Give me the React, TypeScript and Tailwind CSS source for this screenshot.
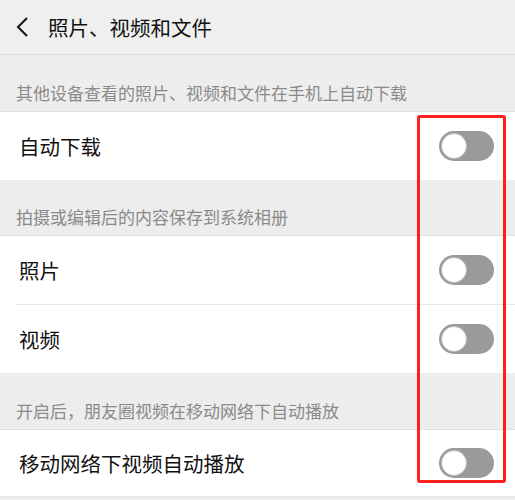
const font = {fontFamily: '"Noto Sans CJK SC", "Noto Sans", sans-serif'};

const Toggle = () => (
  <div className="flex h-[30px] w-[55px] items-center rounded-full bg-[#9a9a9a] pl-[2px]">
    <div className="h-[26px] w-[26px] rounded-full border border-[#bdbdbd] bg-white" />
  </div>
);

const SectionTitle = ({text, h}: {text: string; h: string}) => (
  <div className={`flex items-end border-b border-[#e0e0e0] bg-[#ededed] px-[16px] pb-[10px] ${h}`}>
    <span className="text-[17px] leading-none text-[#8a8a8a]">{text}</span>
  </div>
);

const Row = ({label, divider, h}: {label: string; divider?: boolean; h: string}) => (
  <div className={`flex items-center bg-white pr-[21px] pl-[19px] ${h} ${divider ? 'border-b border-[#e6e6e6]' : ''}`}>
    <span className="flex-1 text-[20.5px] leading-none text-[#111]">{label}</span>
    <Toggle />
  </div>
);

export default function App() {
  return (
    <div className="relative h-[500px] w-[515px] overflow-hidden bg-[#ededed]" style={font}>
      <div className="flex h-[55px] items-center border-b border-[#dcdcdc] bg-[#efefef] pl-[16px]">
        <svg width="14" height="22" viewBox="0 0 14 22" fill="none" stroke="#111" strokeWidth="2">
          <path d="M11 2 L2 11 L11 20" />
        </svg>
        <span className="ml-[18px] text-[20.5px] leading-none text-[#111]">照片、视频和文件</span>
      </div>
      <SectionTitle text="其他设备查看的照片、视频和文件在手机上自动下载" h="h-[57px]" />
      <Row label="自动下载" h="h-[68px]" />
      <SectionTitle text="拍摄或编辑后的内容保存到系统相册" h="h-[56px]" />
      <div className="bg-white">
        <div className="flex h-[68px] items-center pr-[21px] pl-[19px]">
          <span className="flex-1 text-[20.5px] leading-none text-[#111]">照片</span>
          <Toggle />
        </div>
        <div className="ml-[17px] border-t border-[#e6e6e6]" />
        <div className="flex h-[68px] items-center pr-[21px] pl-[19px]">
          <span className="flex-1 text-[20.5px] leading-none text-[#111]">视频</span>
          <Toggle />
        </div>
      </div>
      <SectionTitle text="开启后，朋友圈视频在移动网络下自动播放" h="h-[57px]" />
      <Row label="移动网络下视频自动播放" divider h="h-[67px]" />
      <div className="absolute top-[115px] left-[417px] h-[368px] w-[89px] rounded-[3px] border-[3px] border-[#ff1e1e]" />
    </div>
  );
}
